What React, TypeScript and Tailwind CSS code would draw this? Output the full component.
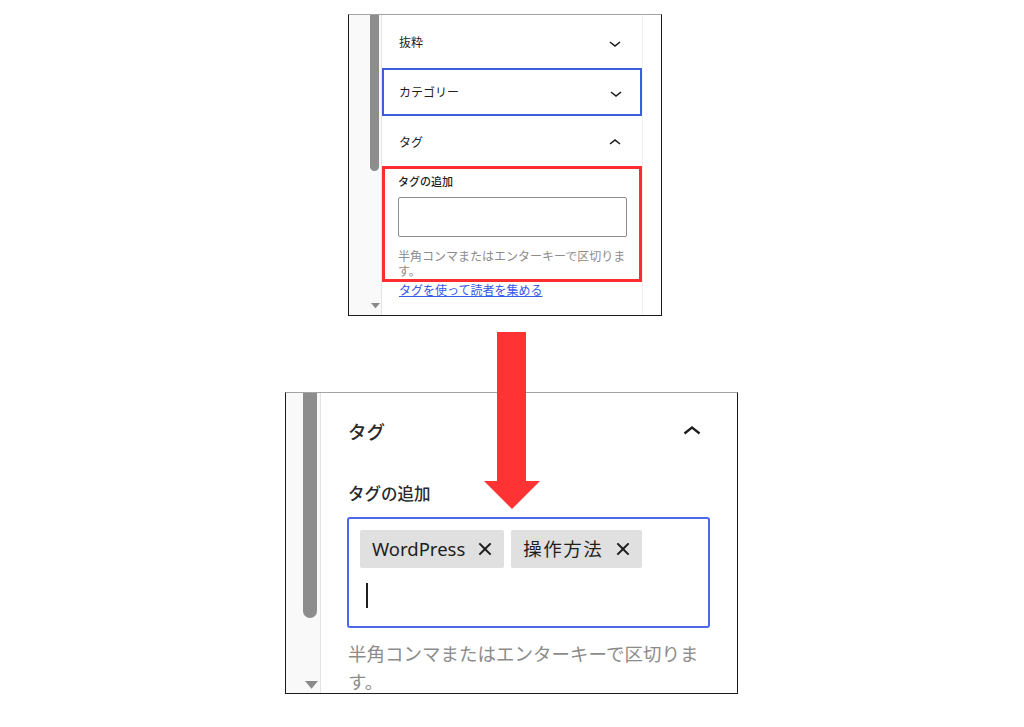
import React from 'react'

const FONT = { fontFamily: '"Noto Sans", "Noto Sans CJK JP", sans-serif' }

function ChevronDown({ size }: { size: number }) {
  return (
    <svg width={size} height={size} viewBox="0 0 24 24" fill="#1e1e1e">
      <path d="M17.5 11.6L12 16l-5.5-4.4.9-1.2L12 14l4.5-3.6 1 1.2z" />
    </svg>
  )
}

function ChevronUp({ size }: { size: number }) {
  return (
    <svg width={size} height={size} viewBox="0 0 24 24" fill="#1e1e1e">
      <path d="M6.5 12.4L12 8l5.5 4.4-.9 1.2L12 10l-4.5 3.6-1-1.2z" />
    </svg>
  )
}

function CloseSmall({ size }: { size: number }) {
  return (
    <svg width={size} height={size} viewBox="0 0 24 24" fill="#1e1e1e">
      <path d="M12 13.06l3.712 3.713 1.061-1.06L13.061 12l3.712-3.712-1.06-1.06L12 10.938 8.288 7.227l-1.061 1.06L10.939 12l-3.712 3.712 1.06 1.061L12 13.061z" />
    </svg>
  )
}

function DownTriangle({ w }: { w: number }) {
  return (
    <svg width={w} height={w * 0.6} viewBox="0 0 10 6">
      <polygon points="0,0 10,0 5,6" fill="#8a8a8a" />
    </svg>
  )
}

function TopPanel() {
  return (
    <div className="ml-[348px] w-[314px] h-[302px] flex border border-[#1a1a1a] border-t-[#a3a3a3] bg-white overflow-hidden">
      {/* scrollbar gutter */}
      <div className="w-[32px] shrink-0 bg-[#f9f9f9] flex flex-col justify-between">
        <div className="ml-[21px] w-[9px] h-[156px] rounded-b-full bg-[#8d8d8d]" />
        <div className="ml-[22px] mb-[7px]">
          <DownTriangle w={9} />
        </div>
      </div>
      <div className="w-px shrink-0 bg-[#e4e4e4]" />

      {/* content */}
      <div className="w-[260px] shrink-0 flex flex-col text-[#1e1e1e]">
        <div className="h-[53px] pt-[3px] flex items-center justify-between pl-[17px] pr-[15px]">
          <span className="text-[12px]">抜粋</span>
          <ChevronDown size={24} />
        </div>
        <div className="h-[48px] pt-[2px] flex items-center justify-between pl-[15px] pr-[12px] border-2 border-[#3d5de0]">
          <span className="text-[12px]">カテゴリー</span>
          <ChevronDown size={24} />
        </div>
        <div className="h-[50px] pt-[3px] flex items-center justify-between pl-[17px] pr-[15px]">
          <span className="text-[12px]">タグ</span>
          <ChevronUp size={24} />
        </div>
        <div className="h-[116px] border-[3px] border-[#ff2d2d] pl-[13px] pr-[12px] pt-[5px]">
          <div className="text-[11px] leading-[16px] font-medium">タグの追加</div>
          <div className="mt-[7px] h-[40px] border border-[#8c8c8c] rounded-[2px] bg-white" />
          <p className="mt-[12px] w-[230px] text-[12px] leading-[15px] text-[#8c8c8c]">
            半角コンマまたはエンターキーで区切ります。
          </p>
        </div>
        <a className="ml-[17px] mt-px text-[12px] leading-[15px] text-[#3858e9] underline">
          タグを使って読者を集める
        </a>
      </div>

      <div className="flex-1 border-l border-[#f1f1f1]" />
    </div>
  )
}

function Chip({ label, cjk }: { label: string; cjk?: boolean }) {
  return (
    <div className="h-[38px] flex items-center pl-[12px] pr-[3px] bg-[#e0e0e0] rounded-[2px]">
      <span className={cjk ? 'text-[18.5px] tracking-[1.5px] text-[#1e1e1e]' : 'text-[18.5px] text-[#1e1e1e]'}>{label}</span>
      <span className="ml-[4px] flex items-center">
        <CloseSmall size={32} />
      </span>
    </div>
  )
}

function BottomPanel() {
  return (
    <div className="ml-[285px] w-[453px] h-[302px] flex border border-[#1a1a1a] border-t-[#a3a3a3] bg-white overflow-hidden">
      <div className="w-[34px] shrink-0 bg-[#f9f9f9] flex flex-col justify-between">
        <div className="ml-[17px] w-[14px] h-[225px] rounded-b-full bg-[#8d8d8d]" />
        <div className="ml-[19px] mb-[4px]">
          <DownTriangle w={13} />
        </div>
      </div>
      <div className="w-px shrink-0 bg-[#e4e4e4]" />

      <div className="flex-1 pl-[26px] pr-[27px] text-[#1e1e1e]">
        <div className="mt-[21px] h-[36px] flex items-center justify-between">
          <span className="pl-px text-[18.5px] font-medium text-[#2a2a2a]">タグ</span>
          <ChevronUp size={36} />
        </div>
        <div className="mt-[32px] pl-px text-[16.5px] leading-[24px] font-medium text-[#2a2a2a]">タグの追加</div>
        <div className="mt-[11px] h-[111px] border-2 border-[#4d68ec] rounded-[3px] pl-[11px] pr-[11px] pt-[11px] flex flex-wrap content-start gap-x-[7px] gap-y-[8px]">
          <Chip label="WordPress" />
          <Chip label="操作方法" cjk />
          <div className="basis-full h-[38px] flex items-center">
            <div className="ml-[6px] w-[2px] h-[25px] bg-[#1e1e1e]" />
          </div>
        </div>
        <p className="mt-[12px] pl-px w-[362px] text-[18.5px] leading-[28px] text-[#8c8c8c]">
          半角コンマまたはエンターキーで区切ります。
        </p>
      </div>
    </div>
  )
}

export default function App() {
  return (
    <div className="relative w-[1024px] h-[727px] bg-white overflow-hidden" style={FONT}>
      <div className="pt-[14px] flex flex-col">
        <TopPanel />
        <div className="h-[76px]" />
        <BottomPanel />
      </div>

      {/* red arrow annotation */}
      <svg className="absolute left-[484px] top-[332px]" width="56" height="177" viewBox="0 0 56 177">
        <polygon points="13,0 42,0 42,149 56,149 28,177 0,149 13,149" fill="#ff3333" />
      </svg>
    </div>
  )
}
